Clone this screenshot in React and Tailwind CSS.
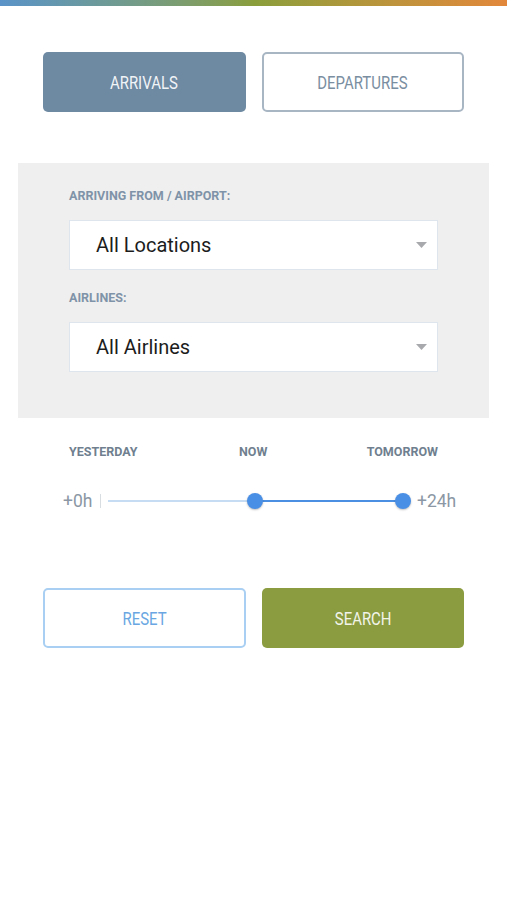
import React from "react";

function Caret() {
  return (
    <svg width="11" height="6" viewBox="0 0 11 6" className="shrink-0">
      <path d="M0 0 L11 0 L5.5 6 Z" fill="#a7a9ac" />
    </svg>
  );
}

function Select({ value }) {
  return (
    <div className="flex h-[50px] items-center justify-between border border-[#dfe5ec] bg-white pl-[26px] pr-[10px]">
      <span className="text-[20px] text-[#1c1c1c]">{value}</span>
      <Caret />
    </div>
  );
}

function BtnText({ children }) {
  return <span className="inline-block scale-x-[0.83] text-[18px]">{children}</span>;
}

export default function App() {
  return (
    <div className="min-h-[900px] w-[507px] bg-white font-['Roboto',sans-serif]">
      <div className="h-[6px] bg-gradient-to-r from-[#5a93c8] via-[#8a9e3c] to-[#e2873b]" />
      <div className="grid grid-cols-2 gap-[16px] px-[43px] pt-[46px]">
        <button className="flex h-[60px] items-center justify-center rounded-[5px] bg-[#6e89a2] text-[#f1f4f7]">
          <BtnText>ARRIVALS</BtnText>
        </button>
        <button className="flex h-[60px] items-center justify-center rounded-[5px] border-2 border-[#a8b6c4] bg-white text-[#7a8ea1]">
          <BtnText>DEPARTURES</BtnText>
        </button>
      </div>

      <div className="mx-[18px] mt-[51px] bg-[#efefef] px-[51px] pt-[26px] pb-[46px]">
        <div className="text-[12.5px] leading-[14px] font-bold text-[#7f93a8]">ARRIVING FROM / AIRPORT:</div>
        <div className="mt-[17px]">
          <Select value="All Locations" />
        </div>
        <div className="mt-[21px] text-[12.5px] leading-[14px] font-bold text-[#7f93a8]">AIRLINES:</div>
        <div className="mt-[17px]">
          <Select value="All Airlines" />
        </div>
      </div>

      <div className="px-[69px] pt-[27px]">
        <div className="relative flex h-[14px] justify-between text-[12.5px] leading-[14px] font-bold text-[#707f8f]">
          <span>YESTERDAY</span>
          <span className="absolute left-[170px] top-0">NOW</span>
          <span>TOMORROW</span>
        </div>
      </div>

      <div className="mt-[33px] flex h-[18px] items-center pl-[63px]">
        <span className="w-[31px] text-[17.5px] text-[#8b97a4]">+0h</span>
        <span className="ml-[6px] h-[14px] w-px bg-[#d8dde2]" />
        <div className="relative ml-[7px] h-[16px] w-[303px]">
          <div className="absolute left-0 right-0 top-[7px] h-[2px] bg-[#c6dcf2]" />
          <div className="absolute left-[147px] right-[8px] top-[7px] h-[2px] bg-[#4a8fe2]" />
          <div className="absolute left-[139px] top-0 h-[16px] w-[16px] rounded-full bg-[#4a8fe6] shadow-[0_1px_2px_rgba(0,0,0,0.25)]" />
          <div className="absolute left-[287px] top-0 h-[16px] w-[16px] rounded-full bg-[#4a8fe6] shadow-[0_1px_2px_rgba(0,0,0,0.25)]" />
        </div>
        <span className="ml-[6px] text-[17.5px] text-[#8b97a4]">+24h</span>
      </div>

      <div className="mt-[78px] grid grid-cols-2 gap-[16px] px-[43px]">
        <button className="flex h-[60px] items-center justify-center rounded-[5px] border-2 border-[#a9cff2] bg-white text-[#6aa7e2]">
          <BtnText>RESET</BtnText>
        </button>
        <button className="flex h-[60px] items-center justify-center rounded-[5px] bg-[#8b9c40] text-[#f2f4ea]">
          <BtnText>SEARCH</BtnText>
        </button>
      </div>
    </div>
  );
}
